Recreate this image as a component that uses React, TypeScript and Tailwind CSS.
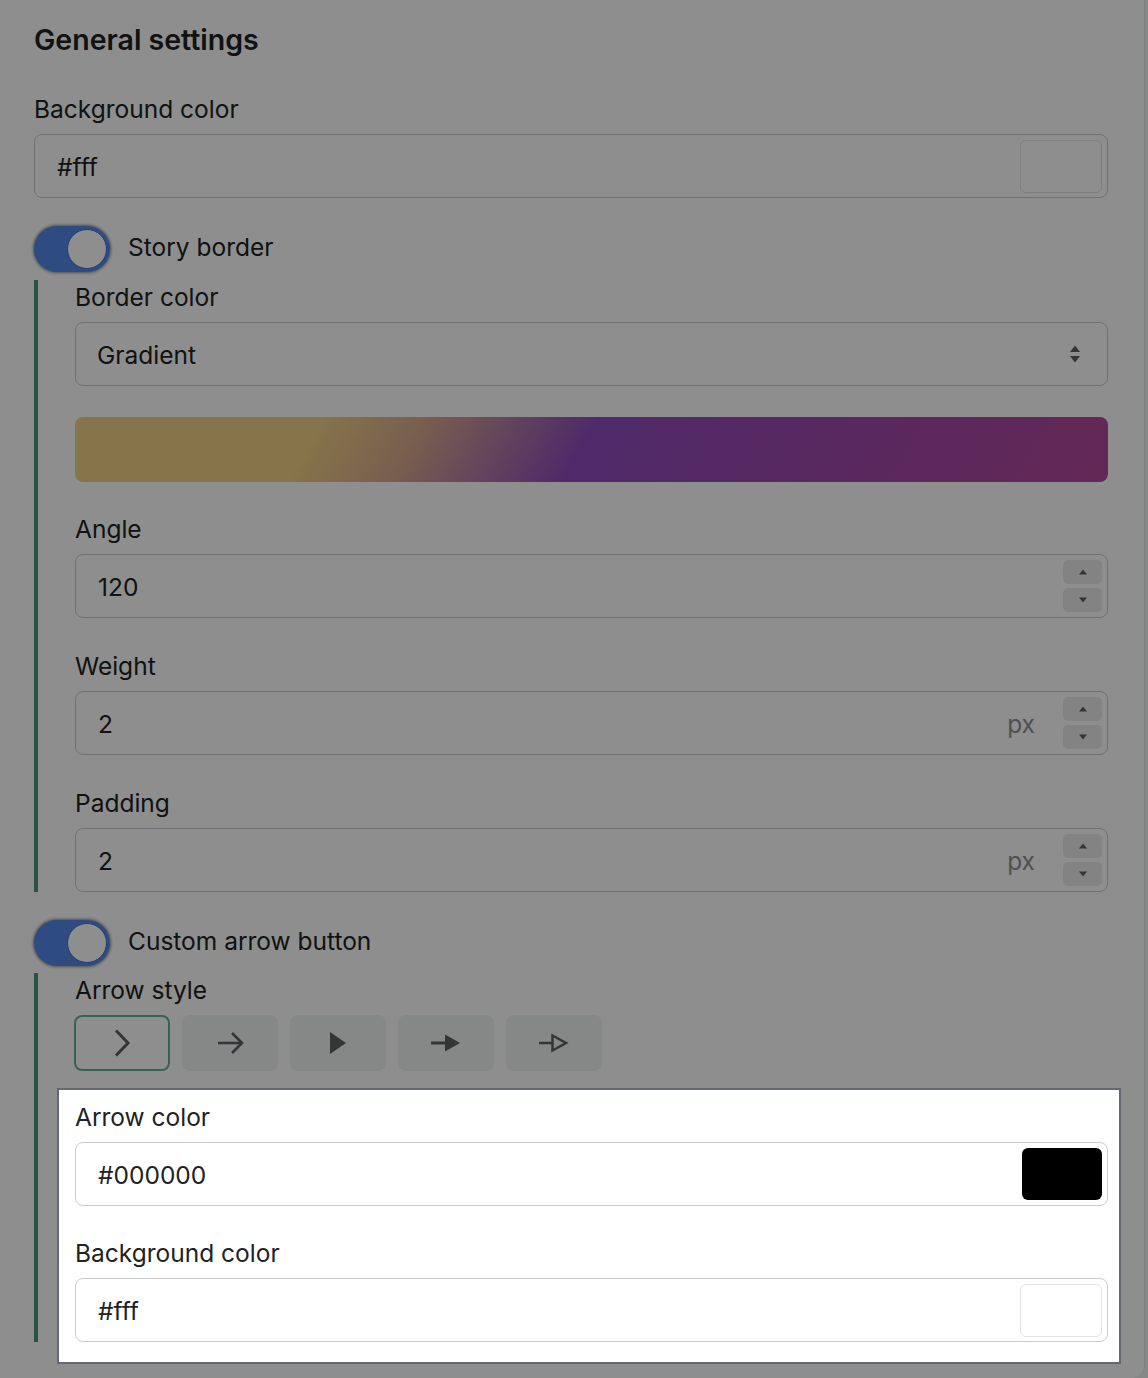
import type { ReactNode } from 'react'

const arrowStyles = ['chevron', 'arrow', 'play', 'solid', 'outline'] as const

function Label({ children }: { children: ReactNode }) {
  return <div className="mb-[9px] text-[24.5px] leading-[32px] text-[#202223]">{children}</div>
}

function Toggle({ label }: { label: string }) {
  return (
    <div className="mt-[28px] flex items-center gap-[18px]">
      <div className="flex h-[46px] w-[76px] items-center justify-end rounded-full bg-[#5487e9] p-[3px] shadow-[0_0_3px_1px_rgba(0,0,0,0.45)]">
        <div className="h-[40px] w-[40px] rounded-full border border-[#3d6fd4] bg-white" />
      </div>
      <span className="-mt-1 text-[24.5px] leading-[32px] text-[#202223]">{label}</span>
    </div>
  )
}

function ColorField({ value, swatch }: { value: string; swatch: 'white' | 'black' }) {
  return (
    <div className="flex h-16 items-center rounded-lg border border-[#c9cccf] bg-white pl-[22px] pr-[5px]">
      <span className="mt-0.5 flex-1 text-[24.5px] text-[#202223]">{value}</span>
      {swatch === 'black' ? (
        <div className="h-[52px] w-20 rounded-md bg-black" />
      ) : (
        <div className="h-[53px] w-[82px] rounded-md border border-[#e1e3e5] bg-white" />
      )}
    </div>
  )
}

function Caret({ up }: { up?: boolean }) {
  return (
    <svg width="8" height="6" viewBox="0 0 8 6" fill="#5c5f62">
      {up ? <path d="M0 5.5 L4 0.5 L8 5.5 Z" /> : <path d="M0 0.5 L4 5.5 L8 0.5 Z" />}
    </svg>
  )
}

function NumberField({ value, unit }: { value: string; unit?: string }) {
  return (
    <div className="flex h-16 items-center rounded-lg border border-[#c9cccf] bg-white pl-[22px] pr-[5px]">
      <span className="mt-0.5 flex-1 text-[24.5px] text-[#202223]">{value}</span>
      {unit && <span className="mr-[28px] mt-0.5 text-[24.5px] text-[#8c9196]">{unit}</span>}
      <div className="flex flex-col gap-1">
        <div className="flex h-6 w-[39px] items-center justify-center rounded-[5px] bg-[#ececec]">
          <Caret up />
        </div>
        <div className="flex h-6 w-[39px] items-center justify-center rounded-[5px] bg-[#ececec]">
          <Caret />
        </div>
      </div>
    </div>
  )
}

function ArrowIcon({ kind }: { kind: (typeof arrowStyles)[number] }) {
  const c = '#5c5f62'
  return (
    <svg width="32" height="32" viewBox="0 0 32 32" fill="none">
      {kind === 'chevron' && <polyline points="10,3.5 22,16 10,28.5" stroke={c} strokeWidth="3" />}
      {kind === 'arrow' && (
        <g stroke={c} strokeWidth="2.6">
          <path d="M4 16 H27" />
          <polyline points="18,6 28,16 18,26" />
        </g>
      )}
      {kind === 'play' && <path d="M8 5 L24 16 L8 27 Z" fill={c} />}
      {kind === 'solid' && (
        <g>
          <path d="M1 16 H17" stroke={c} strokeWidth="3" />
          <path d="M15 7.5 L30 16 L15 24.5 Z" fill={c} />
        </g>
      )}
      {kind === 'outline' && (
        <g stroke={c} strokeWidth="2.5">
          <path d="M1 16 H14" />
          <path d="M14.5 8.5 L28 16 L14.5 23.5 Z" strokeLinejoin="miter" />
        </g>
      )}
    </svg>
  )
}

export default function App() {
  return (
    <div className="h-[1378px] overflow-hidden bg-[#f1f2f3] font-['Inter',sans-serif]">
      <div className="w-[1145px] rounded-br-xl border-r border-[#e1e3e5] bg-white pb-[36px] pl-[34px] pr-[36px] pt-[22px]">
        <h2 className="text-[28.5px] font-semibold leading-[36px] text-[#202223]">General settings</h2>

        <div className="mt-[35px]">
          <Label>Background color</Label>
          <ColorField value="#fff" swatch="white" />
        </div>

        <Toggle label="Story border" />

        <div className="mt-2 flex flex-col border-l-4 border-[#4b987c] pl-[37px] pt-px">
          <Label>Border color</Label>
          <div className="flex h-16 items-center justify-between rounded-lg border border-[#c9cccf] bg-white pl-[21px] pr-[26px]">
            <span className="mt-0.5 text-[24.5px] text-[#202223]">Gradient</span>
            <svg width="12" height="20" viewBox="0 0 12 20" fill="#5c5f62">
              <path d="M1 8 L6 1.5 L11 8 Z" />
              <path d="M1 12 L6 18.5 L11 12 Z" />
            </svg>
          </div>

          <div className="mt-[31px] h-[65px] rounded-lg bg-[linear-gradient(120deg,#f1d285_23%,#d9a98e_33%,#8e4bbe_49%,#b4489a_100%)]" />

          <div className="mt-[31px]">
            <Label>Angle</Label>
            <NumberField value="120" />
          </div>
          <div className="mt-8">
            <Label>Weight</Label>
            <NumberField value="2" unit="px" />
          </div>
          <div className="mt-8">
            <Label>Padding</Label>
            <NumberField value="2" unit="px" />
          </div>
        </div>

        <Toggle label="Custom arrow button" />

        <div className="mt-[7px] flex flex-col border-l-4 border-[#4b987c] pl-[37px] pt-px">
          <Label>Arrow style</Label>
          <div className="-ml-px flex gap-3">
            {arrowStyles.map((k, i) => (
              <div
                key={k}
                className={
                  i === 0
                    ? 'flex h-14 w-24 items-center justify-center rounded-lg border-2 border-[#64b392] bg-white'
                    : 'flex h-14 w-24 items-center justify-center rounded-lg bg-[#f1f2f3]'
                }
              >
                <ArrowIcon kind={k} />
              </div>
            ))}
          </div>

          <div className="relative z-10 -mb-[22px] -ml-[18px] -mr-[13px] mt-[17px] border-2 border-[#646874] bg-white pb-[20px] pl-[16px] pr-[11px] pt-[11px] shadow-[0_0_0_9999px_rgba(0,0,0,0.443)]">
            <Label>Arrow color</Label>
            <ColorField value="#000000" swatch="black" />
            <div className="mt-[31px]">
              <Label>Background color</Label>
              <ColorField value="#fff" swatch="white" />
            </div>
          </div>
        </div>
      </div>
    </div>
  )
}
